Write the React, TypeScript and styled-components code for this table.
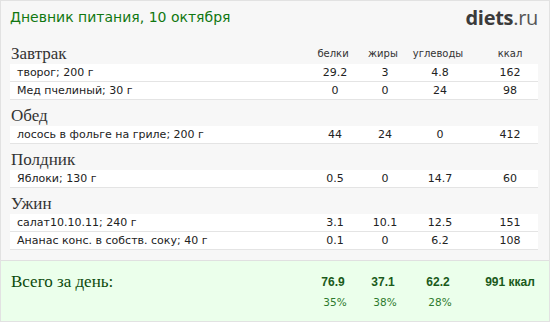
import React from "react";
import styled, { createGlobalStyle } from "styled-components";

const Global = createGlobalStyle`
  html, body { margin: 0; padding: 0; background: #ffffff; }
  #root { width: 550px; height: 322px; }
`;

const Frame = styled.div`
  box-sizing: border-box;
  width: 550px;
  height: 322px;
  border: 1px solid #e2e2e2;
  background: #f7f7f7;
  display: flex;
  flex-direction: column;
`;

const Header = styled.div`
  height: 37px;
  display: flex;
  justify-content: space-between;
  align-items: flex-start;
  padding: 0 11px 0 9px;
`;

const Title = styled.div`
  font-family: "DejaVu Sans", Verdana, sans-serif;
  font-size: 14px;
  line-height: 17px;
  color: #117711;
  padding-top: 8px;
`;

const Logo = styled.div`
  font-family: "Open Sans", "DejaVu Sans", sans-serif;
  font-size: 20px;
  line-height: 20px;
  color: #3b3b3b;
  padding-top: 7px;
  letter-spacing: -0.3px;
  b { font-weight: 700; }
  span { font-weight: 400; color: #555; }
`;

const Body = styled.div`
  flex: 1;
  padding: 0 11px 0 9px;
`;

const Grid = styled.div`
  display: grid;
  grid-template-columns: 1fr 50px 50px 60px 70px;
`;

const SectionHead = styled(Grid)`
  height: 26px;
  align-items: end;
`;

const SectionName = styled.div`
  font-family: "Liberation Serif", "Times New Roman", serif;
  font-size: 17px;
  line-height: 17px;
  color: #333;
  padding-bottom: 2px;
  padding-left: 1px;
`;

const ColLabel = styled.div<{ $last?: boolean }>`
  font-family: "DejaVu Sans", Verdana, sans-serif;
  font-size: 10px;
  line-height: 12px;
  color: #333;
  text-align: center;
  padding-bottom: 4px;
  padding-left: ${(p) => (p.$last ? "14px" : "0")};
`;

const Row = styled(Grid)`
  height: 18px;
  box-sizing: border-box;
  background: #ffffff;
  border-bottom: 1px solid #e4e4e4;
  align-items: center;
  font-family: "DejaVu Sans", Verdana, sans-serif;
  font-size: 11px;
  line-height: 17px;
  color: #222;
`;

const Name = styled.div`
  padding-left: 7px;
`;

const Num = styled.div<{ $last?: boolean }>`
  text-align: center;
  padding-left: ${(p) => (p.$last ? "14px" : "4px")};
`;

const Totals = styled.div`
  height: 60px;
  background: #ebffeb;
  border-top: 1px solid #e0e0e0;
  padding: 0 11px 0 9px;
`;

const TotalsGrid = styled(Grid)`
  padding-top: 11px;
  grid-template-rows: 20px 20px;
`;

const TotalLabel = styled.div`
  font-family: "Liberation Serif", "Times New Roman", serif;
  font-size: 17px;
  line-height: 20px;
  color: #0c4a0c;
  padding-left: 1px;
`;

const TotalVal = styled.div<{ $last?: boolean }>`
  font-family: "Liberation Sans", Arial, sans-serif;
  font-weight: 700;
  font-size: 12px;
  line-height: 20px;
  color: #1a5a1a;
  text-align: center;
  padding-left: ${(p) => (p.$last ? "14px" : "0")};
`;

const Pct = styled.div`
  font-family: "DejaVu Sans", Verdana, sans-serif;
  font-size: 10.5px;
  line-height: 20px;
  color: #2d7a2d;
  text-align: center;
  padding-left: 4px;
`;

type Item = { name: string; b: string; j: string; u: string; k: string };
const sections: { title: string; items: Item[] }[] = [
  {
    title: "Завтрак",
    items: [
      { name: "творог; 200 г", b: "29.2", j: "3", u: "4.8", k: "162" },
      { name: "Мед пчелиный; 30 г", b: "0", j: "0", u: "24", k: "98" },
    ],
  },
  {
    title: "Обед",
    items: [{ name: "лосось в фольге на гриле; 200 г", b: "44", j: "24", u: "0", k: "412" }],
  },
  {
    title: "Полдник",
    items: [{ name: "Яблоки; 130 г", b: "0.5", j: "0", u: "14.7", k: "60" }],
  },
  {
    title: "Ужин",
    items: [
      { name: "салат10.10.11; 240 г", b: "3.1", j: "10.1", u: "12.5", k: "151" },
      { name: "Ананас конс. в собств. соку; 40 г", b: "0.1", j: "0", u: "6.2", k: "108" },
    ],
  },
];

export default function App() {
  return (
    <>
      <Global />
      <Frame>
        <Header>
          <Title>Дневник питания, 10 октября</Title>
          <Logo>
            <b>diets</b>
            <span>.ru</span>
          </Logo>
        </Header>
        <Body>
          {sections.map((s, i) => (
            <div key={s.title}>
              <SectionHead>
                <SectionName>{s.title}</SectionName>
                {i === 0 ? (
                  <>
                    <ColLabel>белки</ColLabel>
                    <ColLabel>жиры</ColLabel>
                    <ColLabel>углеводы</ColLabel>
                    <ColLabel $last>ккал</ColLabel>
                  </>
                ) : null}
              </SectionHead>
              {s.items.map((it) => (
                <Row key={it.name}>
                  <Name>{it.name}</Name>
                  <Num>{it.b}</Num>
                  <Num>{it.j}</Num>
                  <Num>{it.u}</Num>
                  <Num $last>{it.k}</Num>
                </Row>
              ))}
            </div>
          ))}
        </Body>
        <Totals>
          <TotalsGrid>
            <TotalLabel>Всего за день:</TotalLabel>
            <TotalVal>76.9</TotalVal>
            <TotalVal>37.1</TotalVal>
            <TotalVal>62.2</TotalVal>
            <TotalVal $last>991 ккал</TotalVal>
            <div />
            <Pct>35%</Pct>
            <Pct>38%</Pct>
            <Pct>28%</Pct>
            <div />
          </TotalsGrid>
        </Totals>
      </Frame>
    </>
  );
}
